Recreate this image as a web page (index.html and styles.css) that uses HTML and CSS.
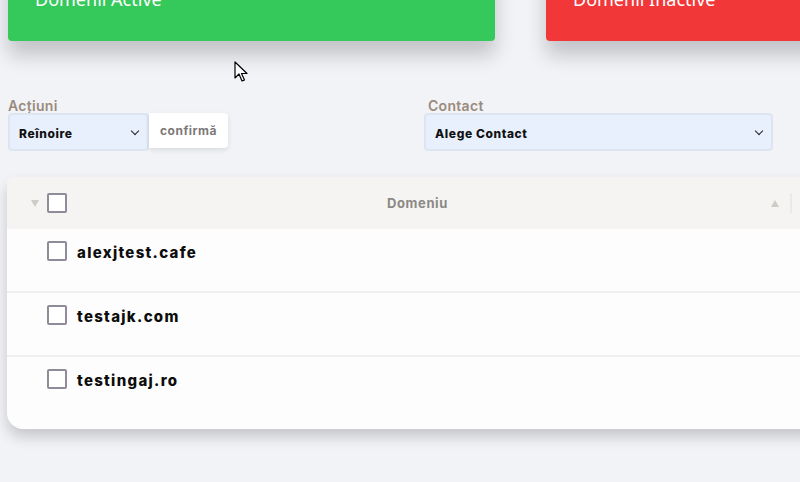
FILE: index.html
```html
<!DOCTYPE html>
<html lang="ro">
<head>
  <meta charset="UTF-8" />
  <meta name="viewport" content="width=device-width, initial-scale=1.0"/>
  <title>Domenii</title>
  <link rel="stylesheet" href="styles.css">
</head>
<body>
  <div class="pagina">
    <!-- Carduri sumar -->
    <div class="carduri">
      <div class="card verde">Domenii Active</div>
      <div class="card rosu">Domenii Inactive</div>
    </div>

    <!-- Filtre -->
    <div class="filtre">
      <div class="grup actiuni">
        <label>Acțiuni</label>
        <div class="rand">
          <div class="select mic">Reînoire <span class="sageata"></span></div>
          <button class="confirma">confirmă</button>
        </div>
      </div>
      <div class="grup contact">
        <label>Contact</label>
        <div class="select mare">Alege Contact <span class="sageata"></span></div>
      </div>
    </div>

    <!-- Tabel domenii -->
    <div class="tabel">
      <div class="antet">
        <span class="tri jos"></span>
        <span class="bifa"></span>
        <span class="titlu">Domeniu</span>
        <span class="tri sus"></span>
        <span class="separator"></span>
      </div>
      <div class="linie"><span class="bifa"></span><span class="nume">alexjtest.cafe</span></div>
      <div class="linie"><span class="bifa"></span><span class="nume">testajk.com</span></div>
      <div class="linie ultima"><span class="bifa"></span><span class="nume">testingaj.ro</span></div>
    </div>
  </div>

  <svg class="cursor" width="14" height="22" viewBox="0 0 14 22">
    <path d="M1 1 L1 17 L5 13 L8 20 L10.5 19 L7.5 12.5 L13 12.5 Z" fill="#fff" stroke="#000" stroke-width="1.2" stroke-linejoin="round"/>
  </svg>
</body>
</html>
```

FILE: styles.css
```css
body {
  margin: 0;
  padding: 0;
  background: #f2f3f7;
  font-family: 'Inter', 'Noto Sans', sans-serif;
  overflow: hidden;
  height: 482px;
  position: relative;
}
.pagina {
  padding-left: 8px;
  width: 1100px;
}
.carduri {
  display: flex;
  gap: 51px;
  margin-top: -50px;
}
.card {
  width: 487px;
  height: 91px;
  box-sizing: border-box;
  border-radius: 4px;
  padding: 38px 0 0 27px;
  color: #fff;
  font-family: 'Noto Sans', sans-serif;
  font-size: 18px;
  line-height: 22px;
  box-shadow: 0 14px 20px rgba(0, 0, 0, 0.2);
}
.verde {
  background: #35c85b;
}
.rosu {
  background: #f23739;
}
.filtre {
  display: flex;
  margin-top: 55px;
}
.grup label {
  display: block;
  font-size: 14px;
  font-weight: 600;
  letter-spacing: 0.3px;
  color: #9a8b7c;
  height: 16px;
  line-height: 16px;
  padding-top: 2px;
  margin-bottom: -1px;
}
.actiuni {
  width: 416px;
}
.contact label {
  padding-left: 4px;
}
.rand {
  display: flex;
  align-items: flex-start;
}
.select {
  box-sizing: border-box;
  height: 38px;
  background: #e8f0fd;
  border: 2px solid #dde5f1;
  border-radius: 4px;
  display: flex;
  align-items: center;
  justify-content: space-between;
  padding: 2px 6px 0 9px;
  font-size: 12px;
  font-weight: 800;
  letter-spacing: 0.6px;
  color: #111;
}
.mic {
  width: 141px;
}
.mare {
  width: 349px;
}
.sageata {
  width: 5px;
  height: 5px;
  border-right: 1.6px solid #222;
  border-bottom: 1.6px solid #222;
  transform: rotate(45deg);
  margin-top: -4px;
  margin-right: 3px;
}
.confirma {
  height: 35px;
  width: 79px;
  border: none;
  background: #fff;
  border-radius: 0 4px 4px 0;
  box-shadow: 0 2px 5px rgba(0, 0, 0, 0.1);
  font-family: 'Inter', sans-serif;
  font-size: 12px;
  font-weight: 700;
  letter-spacing: 0.5px;
  color: #7c7878;
  padding: 0;
}
.tabel {
  margin-top: 26px;
  margin-left: -1px;
  width: 900px;
  background: #fdfdfd;
  border-radius: 8px 0 0 16px;
  box-shadow: 0 8px 14px rgba(0, 0, 0, 0.18);
  overflow: hidden;
}
.antet {
  height: 52px;
  background: #f5f4f2;
  display: flex;
  align-items: center;
  width: 785px;
  padding-right: 115px;
  position: relative;
}
.tri {
  width: 0;
  height: 0;
  border-left: 4px solid transparent;
  border-right: 4px solid transparent;
}
.jos {
  border-top: 7px solid #cfcbc6;
  margin-left: 24px;
  margin-right: 8px;
}
.sus {
  border-bottom: 7px solid #cfcbc6;
  margin-left: auto;
  margin-right: 11px;
}
.separator {
  width: 2px;
  height: 20px;
  background: #ebe9e6;
}
.titlu {
  position: absolute;
  left: 36px;
  width: 749px;
  text-align: center;
  font-size: 13px;
  font-weight: 700;
  letter-spacing: 0.6px;
  color: #8c8884;
  pointer-events: none;
}
.bifa {
  box-sizing: border-box;
  width: 20px;
  height: 20px;
  border: 2px solid #8f8b99;
  border-radius: 2px;
  background: #fff;
}
.linie {
  height: 64px;
  border-bottom: 2px solid #f0efef;
  display: flex;
  align-items: flex-start;
  padding: 12px 0 0 40px;
  box-sizing: border-box;
}
.linie.ultima {
  border-bottom: none;
  height: 72px;
}
.nume {
  margin-left: 10px;
  margin-top: 2px;
  font-family: 'Inter', sans-serif;
  font-size: 15px;
  font-weight: 800;
  letter-spacing: 1.3px;
  color: #0d0d0d;
  line-height: 20px;
}
.cursor {
  position: absolute;
  left: 234px;
  top: 61px;
}
```
